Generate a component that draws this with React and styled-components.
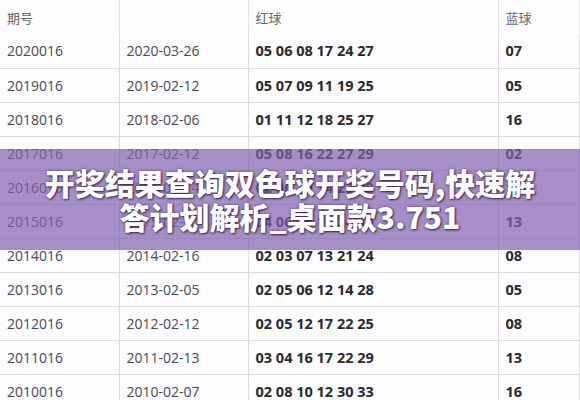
import React from "react";
import styled, { createGlobalStyle } from "styled-components";

const GlobalStyle = createGlobalStyle`
  html, body {
    margin: 0;
    padding: 0;
    background: #fdfcff;
  }
  body {
    font-family: "Open Sans", "Noto Sans CJK SC", sans-serif;
  }
`;

const Page = styled.div`
  position: relative;
  width: 580px;
  height: 400px;
  overflow: hidden;
`;

const Table = styled.table`
  width: 579px;
  border-collapse: collapse;
  table-layout: fixed;
  font-size: 14px;
  color: #444;
`;

const Row = styled.tr`
  height: 34px;
  border-top: 1px solid #dcdcdc;
  &:first-child {
    border-top: none;
  }
`;

const Cell = styled.td`
  padding: 0 0 0 7px;
  border-right: 1px solid #dcdcdc;
  white-space: nowrap;
  vertical-align: middle;
  font-weight: ${(p) => (p.$bold ? 700 : 400)};
  font-size: ${(p) => (p.$bold ? "14.5px" : "14px")};
  color: ${(p) => (p.$bold ? "#2a2a2a" : "#4a4a4a")};
`;

const HeadCell = styled.th`
  padding: 0 0 0 7px;
  text-align: left;
  font-weight: 400;
  font-size: 13px;
  color: #666;
  border-right: 1px solid #e4e4e4;
  font-family: "Noto Sans CJK SC", sans-serif;
`;

const Overlay = styled.div`
  position: absolute;
  left: 0;
  top: 149px;
  width: 580px;
  height: 101px;
  background: rgba(128, 95, 175, 0.7);
  display: flex;
  flex-direction: column;
  align-items: center;
  justify-content: center;
`;

const Title = styled.div`
  font-family: "Noto Sans CJK SC", sans-serif;
  font-weight: 900;
  font-size: 30px;
  line-height: 36px;
  color: #fff;
  text-align: center;
  text-shadow: 1px 1px 2px rgba(40, 20, 60, 0.8), 0 0 3px rgba(40, 20, 60, 0.55);
  margin-top: -2px;
`;

const rows = [
  ["2020016", "2020-03-26", "05 06 08 17 24 27", "07"],
  ["2019016", "2019-02-12", "05 07 09 11 19 25", "05"],
  ["2018016", "2018-02-06", "01 11 12 18 25 27", "16"],
  ["2017016", "2017-02-12", "05 08 16 22 27 29", "02"],
  ["2016016", "2016-02-14", "02 06 10 14 23 28", "11"],
  ["2015016", "2015-02-10", "04 06 15 19 24 30", "13"],
  ["2014016", "2014-02-16", "02 03 07 13 21 24", "08"],
  ["2013016", "2013-02-05", "02 05 06 12 14 28", "05"],
  ["2012016", "2012-02-12", "02 05 12 17 22 25", "08"],
  ["2011016", "2011-02-13", "03 04 16 17 22 29", "13"],
  ["2010016", "2010-02-07", "02 08 10 12 30 33", "16"],
];

export default function App() {
  return (
    <Page>
      <GlobalStyle />
      <Table>
        <colgroup>
          <col style={{ width: 119 }} />
          <col style={{ width: 129 }} />
          <col style={{ width: 250 }} />
          <col style={{ width: 81 }} />
        </colgroup>
        <thead>
          <Row>
            <HeadCell>期号</HeadCell>
            <HeadCell></HeadCell>
            <HeadCell>红球</HeadCell>
            <HeadCell>蓝球</HeadCell>
          </Row>
        </thead>
        <tbody>
          {rows.map((r) => (
            <Row key={r[0]}>
              <Cell>{r[0]}</Cell>
              <Cell>{r[1]}</Cell>
              <Cell $bold>{r[2]}</Cell>
              <Cell $bold>{r[3]}</Cell>
            </Row>
          ))}
        </tbody>
      </Table>
      <Overlay>
        <Title>开奖结果查询双色球开奖号码,快速解</Title>
        <Title>答计划解析_桌面款3.751</Title>
      </Overlay>
    </Page>
  );
}
